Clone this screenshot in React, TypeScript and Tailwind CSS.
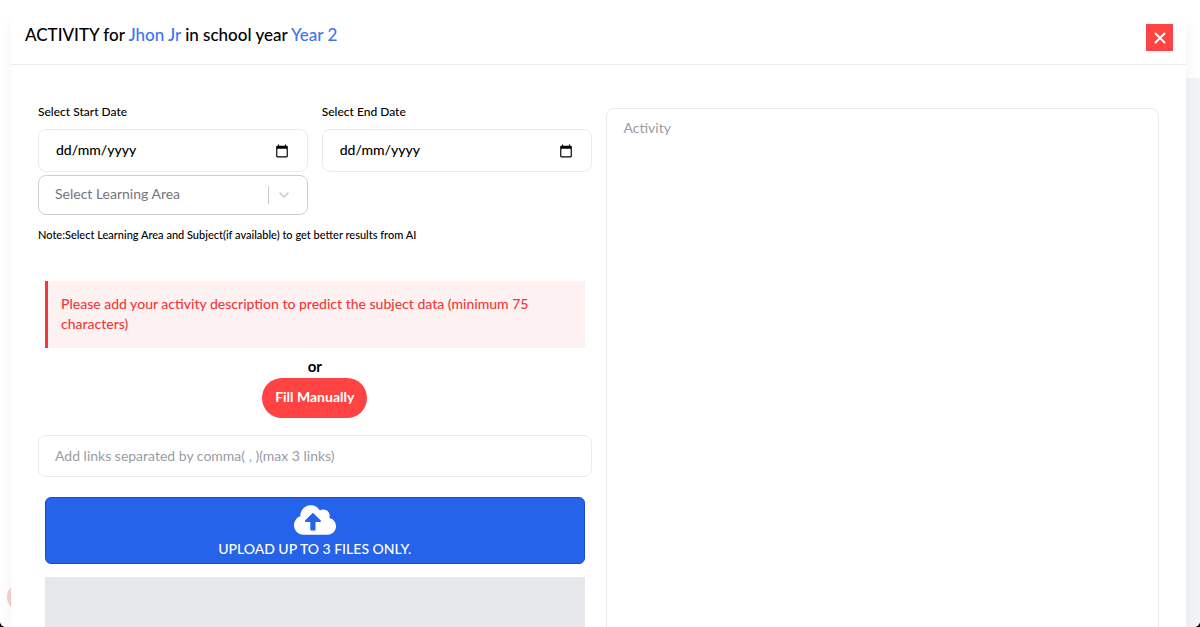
import React from "react";
import { ChevronDown, X } from "lucide-react";
import { FaCloudUploadAlt } from "react-icons/fa";

function CalendarIcon() {
  return (
    <svg viewBox="0 0 24 24" className="size-[14px]" fill="currentColor" aria-hidden="true">
      <path d="M20 3h-1V1h-2v2H7V1H5v2H4c-1.1 0-2 .9-2 2v16c0 1.1.9 2 2 2h16c1.1 0 2-.9 2-2V5c0-1.1-.9-2-2-2zm0 18H4V8h16v13z" />
    </svg>
  );
}

function DateField({ id, label }: { id: string; label: string }) {
  return (
    <div>
      <label htmlFor={id} className="block text-xs leading-4 font-medium">
        {label}
      </label>
      <div className="mt-[9px] flex h-[43px] items-center rounded-lg border border-[#ebebed] px-[17px]">
        <input
          id={id}
          type="text"
          placeholder="dd/mm/yyyy"
          className="min-w-0 flex-1 bg-transparent pb-0.5 text-sm leading-5 font-medium outline-none placeholder:text-black"
        />
        <button type="button" aria-label={`Open calendar: ${label}`} className="px-px">
          <CalendarIcon />
        </button>
      </div>
    </div>
  );
}

export default function App() {
  return (
    <div className="h-screen overflow-hidden bg-black font-['Lato','Liberation_Sans',sans-serif] text-black">
      <div className="relative h-full overflow-hidden rounded-b-md bg-white">
        <div className="absolute inset-x-0 top-[78px] bottom-0 flex justify-end">
          <div className="w-1/2 bg-[#f3f4f6]" />
        </div>
        <div className="absolute inset-y-0 left-0 w-1/2 bg-white" />
        <div className="absolute bottom-4 left-[7px] size-7 rounded-full bg-[#ffcccc]" />

        <div className="relative h-full pr-[14px] pl-[11px]">
          <section
            role="dialog"
            aria-labelledby="dialog-title"
            className="min-h-full bg-white shadow-[0_25px_16px_rgba(0,0,0,0.06)]"
          >
            <header className="flex items-start justify-between border-b border-[#ececee] pt-6 pr-[13px] pb-[13px] pl-[14px]">
              <h1 id="dialog-title" className="text-[17px] leading-[22px] font-medium">
                ACTIVITY for <span className="text-[#3b76f0]">Jhon Jr</span> in school year{" "}
                <span className="text-[#3b76f0]">Year 2</span>
              </h1>
              <button
                type="button"
                aria-label="Close"
                className="flex size-[27px] items-center justify-center bg-[#ff4343] text-white"
              >
                <X size={18} strokeWidth={2.5} />
              </button>
            </header>

            <form className="grid grid-cols-2 gap-[14px] px-[27px] pt-[39px]">
              <div>
                <div className="grid grid-cols-2 gap-x-[14px] gap-y-[3px]">
                  <DateField id="start-date" label="Select Start Date" />
                  <DateField id="end-date" label="Select End Date" />
                  <div className="relative">
                    <select
                      aria-label="Learning area"
                      className="h-10 w-full appearance-none rounded-lg border border-[#cfcfd1] bg-white pr-12 pb-0.5 pl-4 text-sm text-[#75757a] outline-none"
                    >
                      <option>Select Learning Area</option>
                    </select>
                    <span className="pointer-events-none absolute inset-y-0 right-4 flex items-center gap-[7px] text-[#cccccc]">
                      <span className="h-[18px] w-px bg-[#cccccc]" />
                      <ChevronDown size={16} strokeWidth={2.5} />
                    </span>
                  </div>
                </div>
                <p className="mt-3 text-[11px] leading-4 font-medium">
                  Note:Select Learning Area and Subject(if available) to get better results from AI
                </p>

                <div className="px-[7px]">
                  <p
                    role="alert"
                    className="mt-[38px] border-l-3 border-[#f03a3a] bg-[#fef1f1] px-[13px] pt-[13px] pb-[14px] text-sm leading-5 font-medium text-[#f03a3a]"
                  >
                    Please add your activity description to predict the subject data (minimum 75
                    characters)
                  </p>
                </div>

                <div className="flex flex-col items-center pt-[7px]">
                  <span className="pb-px text-[15px] leading-[22px] font-bold">or</span>
                  <button
                    type="button"
                    className="h-10 rounded-full bg-[#ff4343] px-[13px] pb-0.5 text-sm font-bold text-white"
                  >
                    Fill Manually
                  </button>
                </div>

                <input
                  type="text"
                  aria-label="Links"
                  placeholder="Add links separated by comma( , )(max 3 links)"
                  className="mt-[17px] h-[42px] w-full rounded-lg border border-[#ebebed] px-4 pb-0.5 text-sm outline-none placeholder:text-[#9a9ca3]"
                />

                <div className="mt-5 px-[7px]">
                  <button
                    type="button"
                    className="flex h-[67px] w-full flex-col items-center rounded-md border border-[#134bdc] bg-[#2563eb] pt-[5px] text-sm leading-5 font-medium text-white"
                  >
                    <FaCloudUploadAlt className="mb-0.5 h-[34px] w-[42px]" aria-hidden="true" />
                    UPLOAD UP TO 3 FILES ONLY.
                  </button>
                  <div className="mt-[13px] h-[180px] bg-[#e5e7eb]" />
                </div>
              </div>

              <textarea
                aria-label="Activity"
                placeholder="Activity"
                className="mt-1 h-[600px] w-full resize-none rounded-lg border border-[#ebebed] px-[17px] py-[9px] text-sm leading-5 outline-none placeholder:text-[#9a9ca3]"
              />
            </form>
          </section>
        </div>
      </div>
    </div>
  );
}
